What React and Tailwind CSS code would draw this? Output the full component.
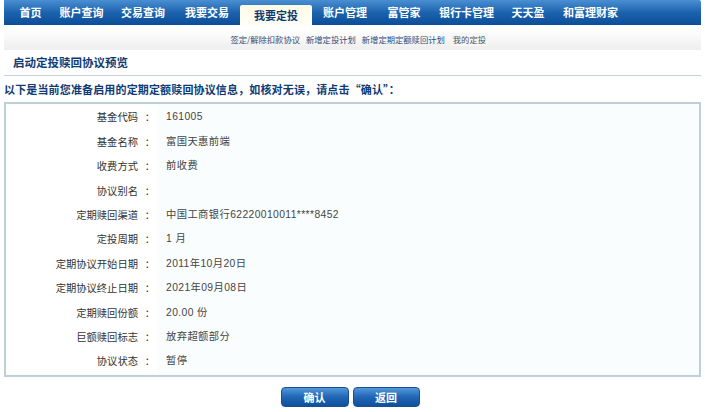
import React from "react";

const navItems = [
  { t: "首页", w: 41 },
  { t: "账户查询", w: 61 },
  { t: "交易查询", w: 62 },
  { t: "我要交易", w: 66 },
  { t: "我要定投", w: 72, active: true },
  { t: "账户管理", w: 66 },
  { t: "富管家", w: 52 },
  { t: "银行卡管理", w: 73 },
  { t: "天天盈", w: 50 },
  { t: "和富理财家", w: 75 },
];

const rows = [
  ["基金代码", "161005"],
  ["基金名称", "富国天惠前端"],
  ["收费方式", "前收费"],
  ["协议别名", ""],
  ["定期赎回渠道", "中国工商银行62220010011****8452"],
  ["定投周期", "1 月"],
  ["定期协议开始日期", "2011年10月20日"],
  ["定期协议终止日期", "2021年09月08日"],
  ["定期赎回份额", "20.00 份"],
  ["巨额赎回标志", "放弃超额部分"],
  ["协议状态", "暂停"],
];

const cjk = { fontFamily: '"Noto Sans CJK SC", sans-serif' };
const val = { fontFamily: '"Liberation Sans", "Noto Sans CJK SC", sans-serif' };

export default function App() {
  return (
    <div className="w-[705px] h-[412px] bg-white px-[4px]" style={cjk}>
      {/* main nav */}
      <div className="h-[25px] flex items-end pl-[6px] bg-gradient-to-b from-[#4a8fd2] via-[#1b63ae] to-[#0c4d98] rounded-tr-[2px]">
        {navItems.map((n) =>
          n.active ? (
            <div
              key={n.t}
              className="h-[20px] flex items-center justify-center text-[11px] font-bold text-[#0d3a72] bg-gradient-to-b from-[#fffbe6] to-[#fffdf6] rounded-t-[2px]"
              style={{ width: n.w }}
            >
              {n.t}
            </div>
          ) : (
            <div
              key={n.t}
              className="h-[25px] flex items-center justify-center text-[11px] font-bold text-white"
              style={{ width: n.w }}
            >
              {n.t}
            </div>
          )
        )}
      </div>
      {/* sub nav */}
      <div className="mt-[4px] h-[21px] flex items-center justify-end pr-[213px] gap-[6px] bg-gradient-to-b from-[#ffffff] to-[#eeeeee] text-[8.3px] text-[#2e4e7a]">
        <span>签定/解除扣款协议</span>
        <span>新增定投计划</span>
        <span>新增定期定额赎回计划</span>
        <span className="text-[#555] bg-[#f6f6f6] px-[2px]">我的定投</span>
      </div>
      {/* title */}
      <div className="h-[26px] flex items-center pl-[9px] pt-[1px] border-b border-[#c2d3da] text-[11.5px] font-bold text-[#0e3b74]">
        启动定投赎回协议预览
      </div>
      <div className="h-[26px] flex items-center text-[11px] tracking-[0.15px] font-bold text-[#0e3b74]">
        以下是当前您准备启用的定期定额赎回协议信息，如核对无误，请点击“确认”：
      </div>
      {/* panel */}
      <div className="h-[275px] border-2 border-[#bdd0d4] bg-[#fafdfd] pt-[1px] flex flex-col">
        {rows.map(([k, v]) => (
          <div key={k} className="h-[24.4px] flex items-center">
            <div className="w-[152px] h-full flex items-center justify-end text-[10.3px] text-[#333] bg-white">
              <span>{k}</span>
              <span className="w-[16px] ml-[4px] text-center">：</span>
            </div>
            <div className="pl-[8px] text-[10.3px] tracking-[0.4px] text-[#444]" style={val}>
              {v}
            </div>
          </div>
        ))}
      </div>
      {/* buttons */}
      <div className="mt-[10px] flex justify-center gap-[4px] pr-[5px]">
        <button className="w-[68px] h-[20px] rounded-[4px] bg-gradient-to-b from-[#5298da] via-[#1f66b4] to-[#10509d] text-white text-[11px] font-bold border border-[#1a4f8f]">
          确认
        </button>
        <button className="w-[67px] h-[20px] rounded-[4px] bg-gradient-to-b from-[#5298da] via-[#1f66b4] to-[#10509d] text-white text-[11px] font-bold border border-[#1a4f8f]">
          返回
        </button>
      </div>
    </div>
  );
}
